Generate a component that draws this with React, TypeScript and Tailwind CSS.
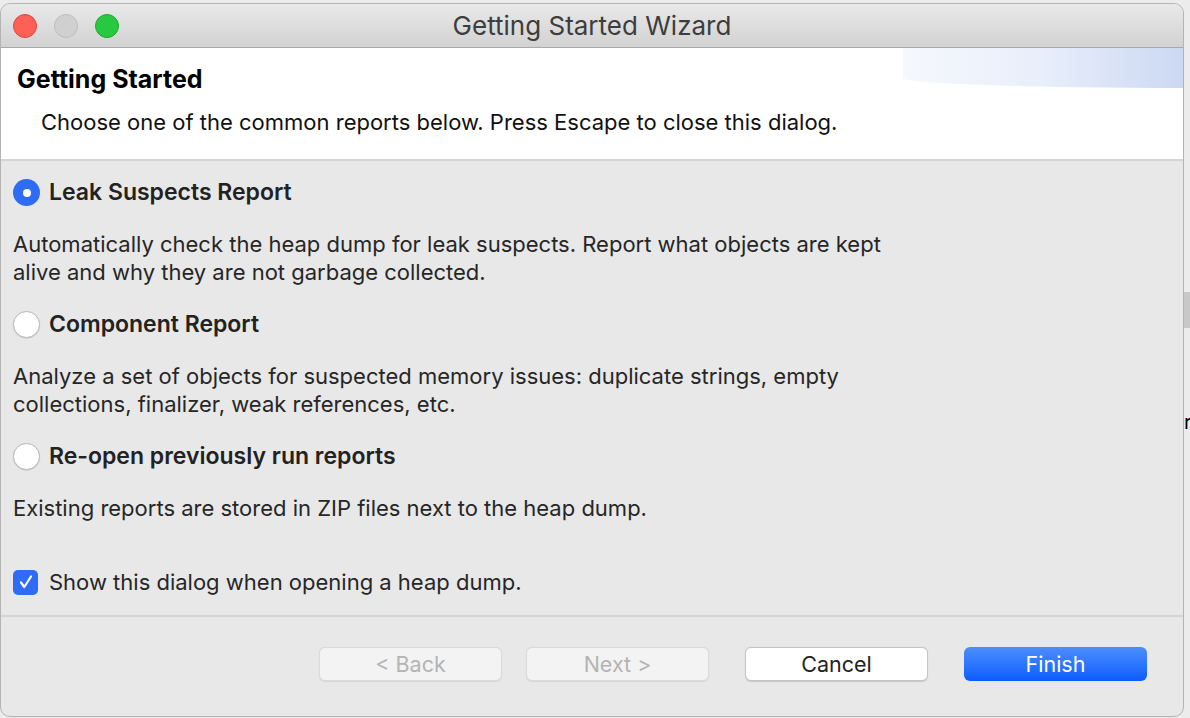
import React, { useState } from "react";

type Report = { id: string; title: string; desc: string[] };

const reports: Report[] = [
  {
    id: "leak",
    title: "Leak Suspects Report",
    desc: [
      "Automatically check the heap dump for leak suspects. Report what objects are kept",
      "alive and why they are not garbage collected.",
    ],
  },
  {
    id: "component",
    title: "Component Report",
    desc: [
      "Analyze a set of objects for suspected memory issues: duplicate strings, empty",
      "collections, finalizer, weak references, etc.",
    ],
  },
  {
    id: "reopen",
    title: "Re-open previously run reports",
    desc: ["Existing reports are stored in ZIP files next to the heap dump."],
  },
];

function Radio({ checked }: { checked: boolean }) {
  if (checked) {
    return (
      <span className="flex h-[27px] w-[27px] shrink-0 items-center justify-center rounded-full bg-[#2f6cf6]">
        <span className="h-[8px] w-[8px] rounded-full bg-white" />
      </span>
    );
  }
  return (
    <span className="h-[27px] w-[27px] shrink-0 rounded-full border border-[#b9b9b9] bg-white shadow-[0_0.5px_1px_rgba(0,0,0,0.15)]" />
  );
}

function WizButton({
  label,
  variant,
}: {
  label: string;
  variant: "disabled" | "normal" | "primary";
}) {
  const base =
    "flex h-[34px] w-[183px] items-center justify-center rounded-[6px] text-[21.5px]";
  if (variant === "primary") {
    return (
      <div className={`${base} bg-gradient-to-b from-[#4b8dfb] to-[#0a5cff] text-white`}>
        {label}
      </div>
    );
  }
  if (variant === "disabled") {
    return (
      <div
        className={`${base} border border-[#dadada] bg-[#f3f3f3] text-[#b3b3b3] shadow-[0_0.5px_1px_rgba(0,0,0,0.08)]`}
      >
        {label}
      </div>
    );
  }
  return (
    <div
      className={`${base} border border-[#c4c4c4] bg-white text-[#222] shadow-[0_0.5px_1px_rgba(0,0,0,0.15)]`}
    >
      {label}
    </div>
  );
}

export default function App() {
  const [selected, setSelected] = useState("leak");
  const [showDialog, setShowDialog] = useState(true);

  return (
    <div
      className="flex h-[718px] w-[1190px] overflow-hidden bg-[#ececec]"
      style={{ fontFamily: "Inter, 'Liberation Sans', sans-serif" }}
    >
      {/* window */}
      <div className="mt-[3px] flex h-[714px] w-[1184px] shrink-0 flex-col overflow-hidden rounded-[10px] border border-[#b4b4b4] bg-[#e8e8e8]">
        {/* title bar */}
        <div className="relative flex h-[44px] shrink-0 items-center border-b border-[#a9a9a9] bg-gradient-to-b from-[#e9e9e9] to-[#d2d2d2]">
          <div className="flex items-center gap-[17px] pl-[12px]">
            <span className="h-[24px] w-[24px] rounded-full border border-[#e0443e] bg-[#fe5f57]" />
            <span className="h-[24px] w-[24px] rounded-full border border-[#bdbdbd] bg-[#d0d0d0]" />
            <span className="h-[24px] w-[24px] rounded-full border border-[#1aab29] bg-[#28c840]" />
          </div>
          <div className="absolute inset-0 flex items-center justify-center text-[26px] text-[#3d3d3d]">
            Getting Started Wizard
          </div>
        </div>

        {/* header */}
        <div className="relative flex h-[113px] shrink-0 flex-col border-b-2 border-[#d4d4d4] bg-white">
          <div
            className="absolute right-0 top-0 h-[40px] w-[280px] bg-gradient-to-r from-[#f6f8fd] via-[#e8eefa] to-[#ccd8f3]"
            style={{ borderBottomLeftRadius: "100% 25%" }}
          />
          <div className="relative pl-[16px] pt-[16px] text-[25px] font-bold leading-[30px] text-black">
            Getting Started
          </div>
          <div className="relative pl-[40px] pt-[14px] text-[22px] leading-[28px] text-[#111]">
            Choose one of the common reports below. Press Escape to close this dialog.
          </div>
        </div>

        {/* body */}
        <div className="flex flex-1 flex-col">
          <div className="flex flex-col px-[12px] pt-[18px]">
            {reports.map((r) => (
              <div key={r.id} className="flex flex-col">
                <div
                  className="flex h-[27px] cursor-default items-center gap-[9px]"
                  onClick={() => setSelected(r.id)}
                >
                  <Radio checked={selected === r.id} />
                  <span className="text-[23px] font-semibold text-[#222]">{r.title}</span>
                </div>
                <div className="pb-[25px] pt-[24px] text-[22px] leading-[28px] text-[#262626]">
                  {r.desc.map((l) => (
                    <div key={l}>{l}</div>
                  ))}
                </div>
              </div>
            ))}
            <div
              className="mt-[22px] flex h-[26px] items-center gap-[11px]"
              onClick={() => setShowDialog(!showDialog)}
            >
              <span className="flex h-[25px] w-[25px] items-center justify-center rounded-[5px] bg-[#2f6cf6]">
                {showDialog && (
                  <svg width="20" height="20" viewBox="0 0 20 20" fill="none">
                    <path
                      d="M5 10.5 L8.3 15 L15 4.5"
                      stroke="white"
                      strokeWidth="2.2"
                      strokeLinecap="round"
                      strokeLinejoin="round"
                    />
                  </svg>
                )}
              </span>
              <span className="text-[22px] text-[#262626]">Show this dialog when opening a heap dump.</span>
            </div>
          </div>

          <div className="mt-[20px] border-t-2 border-[#d4d4d4]" />

          <div className="flex gap-[24px] pl-[318px] pt-[30px]">
            <WizButton label="< Back" variant="disabled" />
            <WizButton label="Next >" variant="disabled" />
            <div className="ml-[12px] flex gap-[36px]">
              <WizButton label="Cancel" variant="normal" />
              <WizButton label="Finish" variant="primary" />
            </div>
          </div>
        </div>
      </div>

      {/* background slice */}
      <div className="flex flex-1 flex-col">
        <div className="mt-[292px] h-[36px] w-full bg-[#c8c8c8]" />
        <div className="mt-[84px] text-[20px] leading-[20px] text-black">r</div>
      </div>
    </div>
  );
}
